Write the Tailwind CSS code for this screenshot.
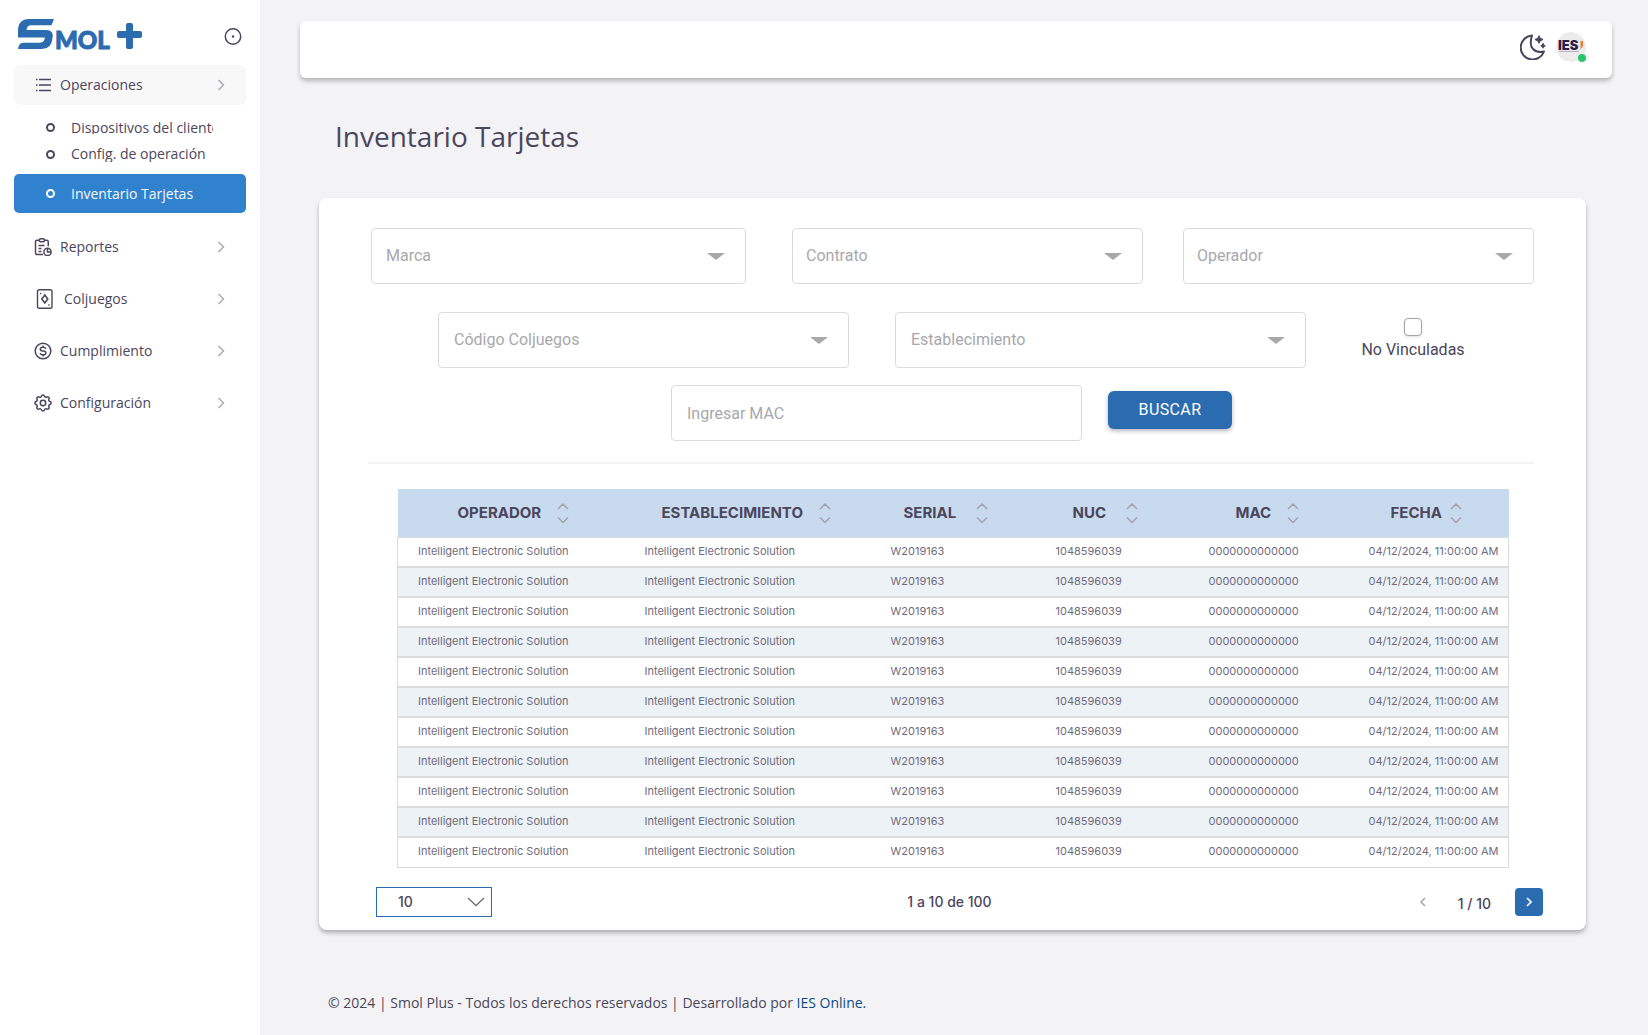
<!DOCTYPE html>
<html lang="es">
<head>
<meta charset="utf-8">
<title>Inventario Tarjetas</title>
<script src="https://cdn.jsdelivr.net/npm/@tailwindcss/browser@4"></script>
</head>
<body class="flex min-h-screen bg-[#f3f3f6] font-['Open_Sans',sans-serif] text-sm text-[#4b465c]">

<aside class="w-[260px] shrink-0 bg-white px-3.5">
  <div class="flex h-[65px] items-start justify-between pr-[3px] pt-[18px]">
    <a href="#" aria-label="Smol+" class="block">
      <svg class="ml-1 h-8 w-[126px] overflow-visible" viewBox="0 0 126 32" fill="#2b6cb0">
        <path d="M36 1L33.500 7.300H13Q9 7.300 8.500 12H28Q36 12 34.500 20Q33.500 31 24 31H0Q1 24.700 5 24.700H22Q26 24.700 27 19.500H0V13Q0 1 11 1Z"/>
        <text x="37" y="30.500" font-family="Lato, sans-serif" font-weight="900" font-size="24" stroke="#2b6cb0" stroke-width="1">MOL</text>
        <path d="M108 5h5q2 0 2 2v6h7q2 0 2 2v3q0 2-2 2h-7v9q0 2-2 2h-3q-2 0-2-2v-9h-7q-2 0-2-2v-3q0-2 2-2h7v-6q0-2 2-2z"/>
      </svg>
    </a>
    <button type="button" aria-label="Fijar menú" class="mt-2"><svg class="size-5" viewBox="0 0 20 20" fill="none" stroke="#4b465c" stroke-width="1.500"><circle cx="10" cy="10.500" r="7.700"/><circle cx="10" cy="10.500" r="1.200" fill="#4b465c" stroke="none"/></svg></button>
  </div>
  <nav aria-label="Principal">
    <a href="#" class="flex h-10 items-center rounded-md bg-[#f8f8f8] pl-5 pr-[21px]">
      <svg class="mr-2 size-[18px]" viewBox="0 0 18 18" fill="none" stroke="#4b465c" stroke-width="1.400"><path d="M5 3.500h12M5 9h12M5 14.500h12M2 3.500h1.500M2 9h1.500M2 14.500h1.500"/></svg>
      <span class="flex-1">Operaciones</span>
      <svg class="h-3 w-2" viewBox="0 0 8 12" fill="none" stroke="#a5a2ad" stroke-width="1.300"><path d="M1.500 1l5 5-5 5"/></svg>
    </a>
    <ul>
      <li class="mt-[11px]"><a href="#" class="flex h-6 items-start pl-8"><span class="mr-4 mt-[7px] size-[9px] rounded-full border-2 border-[#4b465c]"></span><span class="h-[18px] w-[142px] overflow-hidden whitespace-nowrap leading-6">Dispositivos del cliente</span></a></li>
      <li class="mt-0.5"><a href="#" class="flex h-6 items-start pl-8"><span class="mr-4 mt-2 size-[9px] rounded-full border-2 border-[#4b465c]"></span><span class="h-5 w-[142px] overflow-hidden whitespace-nowrap leading-6">Config. de operación</span></a></li>
      <li class="mt-2"><a href="#" aria-current="page" class="flex h-[39px] items-center rounded-[5px] bg-[#3182ce] pl-8 text-[#f5f9fd]"><span class="mr-4 size-[9px] rounded-full border-2 border-white"></span>Inventario Tarjetas</a></li>
    </ul>
    <a href="#" class="mt-3.5 flex h-10 items-center pl-5 pr-[21px]">
      <svg class="mr-2 size-[18px]" viewBox="0 0 24 24" fill="none" stroke="#4b465c" stroke-width="2"><path d="M12 22H4q-2 0-2-2V5q0-2 2-2h3M14 3h3q2 0 2 2v6M7 3q0-2 2-2h3q2 0 2 2v0q0 2-2 2H9q-2 0-2-2zM6 10h8M6 14h4M6 18h4"/><circle cx="18" cy="18.500" r="4.800"/><path d="M18 14v4.500h4.500"/></svg>
      <span class="flex-1">Reportes</span>
      <svg class="h-3 w-2" viewBox="0 0 8 12" fill="none" stroke="#a5a2ad" stroke-width="1.300"><path d="M1.500 1l5 5-5 5"/></svg>
    </a>
    <a href="#" class="mt-3 flex h-10 items-center pl-5 pr-[21px]">
      <svg class="ml-0.5 mr-2.5 h-5 w-[18px]" viewBox="0 0 18 20" fill="none" stroke="#4b465c" stroke-width="1.400"><rect x="1.500" y=".8" width="14.500" height="18.400" rx="1.800"/><path d="M8.800 6l3 4-3 4-3-4z" stroke-width="1.600"/><path d="M4 4.500h1.300M12.300 16h1.300"/></svg>
      <span class="flex-1">Coljuegos</span>
      <svg class="h-3 w-2" viewBox="0 0 8 12" fill="none" stroke="#a5a2ad" stroke-width="1.300"><path d="M1.500 1l5 5-5 5"/></svg>
    </a>
    <a href="#" class="mt-3 flex h-10 items-center pl-5 pr-[21px]">
      <svg class="mr-2 size-[18px]" viewBox="0 0 18 18" fill="none" stroke="#4b465c" stroke-width="1.500"><circle cx="9" cy="9" r="7.800"/><path d="M11.800 6.800Q11.300 5.300 9.500 5.300H8.500Q6.300 5.300 6.300 7.100T8.500 9h1q2.300 0 2.300 1.900T9.500 12.700H8.500Q6.600 12.700 6.200 11.200M9 3.500v1.800M9 12.700v1.800"/></svg>
      <span class="flex-1">Cumplimiento</span>
      <svg class="h-3 w-2" viewBox="0 0 8 12" fill="none" stroke="#a5a2ad" stroke-width="1.300"><path d="M1.500 1l5 5-5 5"/></svg>
    </a>
    <a href="#" class="mt-3 flex h-10 items-center pl-5 pr-[21px]">
      <svg class="mr-2 size-[18px]" viewBox="2 2 20 20" fill="none" stroke="#4b465c" stroke-width="1.700"><path d="M10.325 4.317c.426-1.756 2.924-1.756 3.350 0a1.724 1.724 0 0 0 2.573 1.066c1.543-.94 3.310.826 2.370 2.370a1.724 1.724 0 0 0 1.065 2.572c1.756.426 1.756 2.924 0 3.350a1.724 1.724 0 0 0-1.066 2.573c.94 1.543-.826 3.310-2.370 2.370a1.724 1.724 0 0 0-2.572 1.065c-.426 1.756-2.924 1.756-3.350 0a1.724 1.724 0 0 0-2.573-1.066c-1.543.94-3.310-.826-2.370-2.370a1.724 1.724 0 0 0-1.065-2.572c-1.756-.426-1.756-2.924 0-3.350a1.724 1.724 0 0 0 1.066-2.573c-.94-1.543.826-3.310 2.370-2.370 1 .608 2.296.070 2.572-1.065z"/><circle cx="12" cy="12" r="3"/></svg>
      <span class="flex-1">Configuración</span>
      <svg class="h-3 w-2" viewBox="0 0 8 12" fill="none" stroke="#a5a2ad" stroke-width="1.300"><path d="M1.500 1l5 5-5 5"/></svg>
    </a>
  </nav>
</aside>

<div class="min-w-0 flex-1">
  <header class="ml-10 mr-9 mt-[21px] flex h-[57px] items-center justify-end gap-2.5 rounded-md bg-white pb-1.5 pr-[26px] shadow-[0_3px_4px_rgba(0,0,0,0.25)]">
    <button type="button" aria-label="Modo oscuro"><svg class="size-[26px]" viewBox="0 0 26 26" fill="none" stroke="#4b465c" stroke-width="2" stroke-linejoin="round"><path d="M12 1.500a12 12 0 1 0 12 16Q17 19 13 15T12 1.500z"/><path d="M19 2q.5 3 3.500 3.500Q19.500 6 19 9q-.5-3-3.500-3.500Q18.500 5 19 2zM23 9.500q.3 2 2 2.300-1.700.3-2 2-.3-1.700-2-2 1.700-.3 2-2.300z" stroke-width="1.300" fill="#4b465c"/></svg></button>
    <button type="button" aria-label="Cuenta IES" class="relative size-[30px] rounded-full bg-[#ececec]">
      <svg class="size-[30px]" viewBox="0 0 30 30"><text x="2" y="18" font-family="Inter, sans-serif" font-weight="900" font-size="13" fill="#2b1e48">IES</text><path d="M24.500 9h2.500v5l-2.500 3.500z" fill="#f07b2c"/><path d="M3 19.500h20" stroke="#a9a4b3" stroke-width=".8"/></svg>
      <span class="absolute bottom-0 right-0 size-2 rounded-full bg-[#28c76f]"></span>
    </button>
  </header>

  <main class="ml-[59px] mr-[62px]">
    <h1 class="pl-4 pt-9 text-[28px] font-normal leading-[44px]">Inventario Tarjetas</h1>

    <section class="mt-10 rounded-lg bg-white pb-[13px] pt-[30px] shadow-[0_3px_4px_rgba(0,0,0,0.28)]">
      <form class="font-[Roboto,sans-serif] text-base text-[#a8a8ac]">
        <div class="flex px-[52px]">
          <div class="relative mr-[46px] flex-[375]">
            <select aria-label="Marca" class="h-14 w-full appearance-none rounded border border-[#dbdade] bg-white px-3.5"><option>Marca</option></select>
            <svg class="pointer-events-none absolute right-[21px] top-[25px] h-[7px] w-[18px]" viewBox="0 0 18 7" fill="#a8a8ac"><path d="M0 0h18L9 7z"/></svg>
          </div>
          <div class="relative mr-10 flex-[351]">
            <select aria-label="Contrato" class="h-14 w-full appearance-none rounded border border-[#dbdade] bg-white px-[13px]"><option>Contrato</option></select>
            <svg class="pointer-events-none absolute right-[21px] top-[25px] h-[7px] w-[18px]" viewBox="0 0 18 7" fill="#a8a8ac"><path d="M0 0h18L9 7z"/></svg>
          </div>
          <div class="relative flex-[351]">
            <select aria-label="Operador" class="h-14 w-full appearance-none rounded border border-[#dbdade] bg-white px-[13px]"><option>Operador</option></select>
            <svg class="pointer-events-none absolute right-[21px] top-[25px] h-[7px] w-[18px]" viewBox="0 0 18 7" fill="#a8a8ac"><path d="M0 0h18L9 7z"/></svg>
          </div>
        </div>
        <div class="mt-7 flex pl-[119px] pr-[66px]">
          <div class="relative mr-[46px] flex-[411]">
            <select aria-label="Código Coljuegos" class="h-14 w-full appearance-none rounded border border-[#dbdade] bg-white px-[15px]"><option>Código Coljuegos</option></select>
            <svg class="pointer-events-none absolute right-[21px] top-[25px] h-[7px] w-[18px]" viewBox="0 0 18 7" fill="#a8a8ac"><path d="M0 0h18L9 7z"/></svg>
          </div>
          <div class="relative flex-[411]">
            <select aria-label="Establecimiento" class="h-14 w-full appearance-none rounded border border-[#dbdade] bg-white px-[15px]"><option>Establecimiento</option></select>
            <svg class="pointer-events-none absolute right-[21px] top-[25px] h-[7px] w-[18px]" viewBox="0 0 18 7" fill="#a8a8ac"><path d="M0 0h18L9 7z"/></svg>
          </div>
          <label class="flex flex-[214] flex-col items-center gap-0.5 pt-1.5 text-[#4b465c]">
            <input type="checkbox" class="size-[18px] appearance-none rounded border border-[#a5a2ad] bg-white shadow-sm">
            No Vinculadas
          </label>
        </div>
        <div class="mt-[17px] flex justify-center gap-[26px] pr-0.5">
          <input type="text" aria-label="MAC" placeholder="Ingresar MAC" class="h-14 w-[411px] rounded border border-[#dbdade] bg-white px-[15px] placeholder:text-[#a8a8ac]">
          <button type="submit" class="mt-1.5 h-[38px] w-[124px] rounded-md bg-[#2b6cb0] tracking-wide text-white shadow-[0_2px_4px_rgba(75,70,92,0.4)]">BUSCAR</button>
        </div>
      </form>
      <hr class="ml-[49px] mr-[52px] mt-[21px] border-t-2 border-[#f3f3f5]">

      <div class="mx-[78px] mt-[25px] font-[Inter,sans-serif]">
        <table class="w-full table-fixed border-collapse text-left">
          <colgroup><col class="w-[227px]"><col class="w-[246px]"><col class="w-[165px]"><col class="w-[153px]"><col class="w-[160px]"><col class="w-[160px]"></colgroup>
          <thead id="head" class="bg-[#c8daee] text-[15px]"></thead>
          <tbody id="rows" class="border border-[#dbdade] text-[11px] text-[#6f6b7d]"></tbody>
        </table>
      </div>

      <div class="ml-[57px] mr-[43px] mt-[19px] flex h-[30px] items-center justify-between font-[Inter,sans-serif] text-sm font-medium">
        <div class="relative flex-1">
          <select aria-label="Filas por página" class="h-[30px] w-[116px] appearance-none border border-[#2b6cb0] bg-white pl-[21px]"><option>10</option></select>
          <svg class="pointer-events-none absolute left-[91px] top-2.5 h-2.5 w-[18px]" viewBox="0 0 18 10" fill="none" stroke="#6f6b7d" stroke-width="1.300"><path d="M1 1l8 7.500L17 1"/></svg>
        </div>
        <p class="pr-5">1 a 10 de 100</p>
        <div class="flex flex-1 items-center justify-end">
          <button type="button" aria-label="Página anterior" class="mr-8"><svg class="h-2.5 w-1.5" viewBox="0 0 6 10" fill="none" stroke="#a5a2ad" stroke-width="1.500"><path d="M5 1L1 5l4 4"/></svg></button>
          <span class="pt-1">1 / 10</span>
          <button type="button" aria-label="Página siguiente" class="ml-6 grid size-7 place-items-center rounded bg-[#2b6cb0]"><svg class="h-2.5 w-1.5" viewBox="0 0 6 10" fill="none" stroke="#fff" stroke-width="1.700"><path d="M1 1l4 4-4 4"/></svg></button>
        </div>
      </div>
    </section>
  </main>

  <footer class="ml-[68px] mt-[63px] leading-5">© 2024 | Smol Plus - Todos los derechos reservados | Desarrollado por <a href="#" class="text-[#0b4a84]">IES Online.</a></footer>
</div>

<script>
  const columns = [
    ['OPERADOR', 'pl-[60px] gap-4'],
    ['ESTABLECIMIENTO', 'pl-[37px] gap-4'],
    ['SERIAL', 'pl-[33px] gap-5'],
    ['NUC', 'pl-[37px] gap-5'],
    ['MAC', 'pl-[47px] gap-4'],
    ['FECHA', 'pl-[42px] gap-2'],
  ];
  const sort = '<svg class="h-[22px] w-3" viewBox="0 0 12 22" fill="none" stroke="#a5a2ad" stroke-width="1.500"><path d="M1 7l5-5 5 5M1 15.500l5 5 5-5"/></svg>';
  document.getElementById('head').innerHTML = '<tr class="h-12">' + columns.map(([name, cls]) =>
    `<th scope="col" class="p-0 font-bold"><button type="button" class="flex items-center ${cls}">${name}${sort}</button></th>`).join('') + '</tr>';
  const record = ['Intelligent Electronic Solution', 'Intelligent Electronic Solution', 'W2019163', '1048596039', '0000000000000', '04/12/2024, 11:00:00 AM'];
  const row = '<tr class="h-[30px] border-b-2 border-[#dbdade] last:border-b even:bg-[#edf2f7]">' + record.map(v =>
    `<td class="whitespace-nowrap p-0 pl-5">${v}</td>`).join('') + '</tr>';
  document.getElementById('rows').innerHTML = row.repeat(11);
</script>
</body>
</html>
